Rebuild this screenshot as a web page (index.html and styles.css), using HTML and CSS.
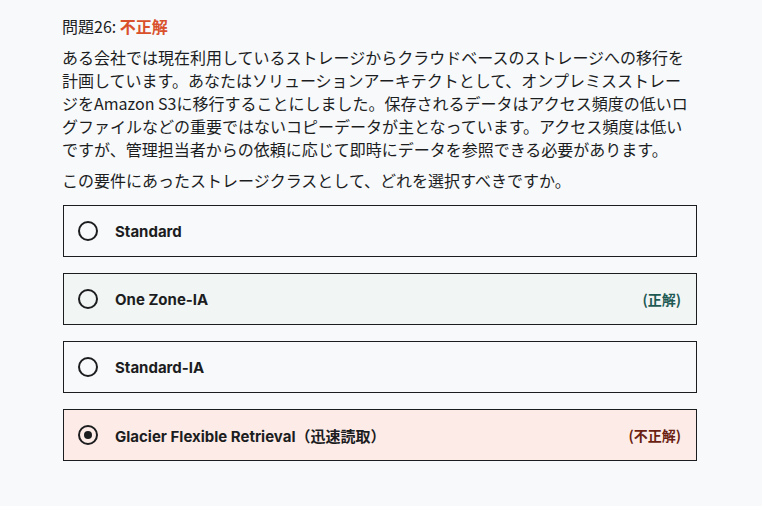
FILE: index.html
```html
<!DOCTYPE html>
<html lang="ja">
<head>
<meta charset="utf-8">
<link rel="stylesheet" href="styles.css">
</head>
<body>
<div class="quiz">
  <div class="title">問題26: <span class="wrong">不正解</span></div>
  <p class="body">ある会社では現在利用しているストレージからクラウドベースのストレージへの移行を<br>計画しています。あなたはソリューションアーキテクトとして、オンプレミスストレー<br>ジをAmazon S3に移行することにしました。保存されるデータはアクセス頻度の低いロ<br>グファイルなどの重要ではないコピーデータが主となっています。アクセス頻度は低い<br>ですが、管理担当者からの依頼に応じて即時にデータを参照できる必要があります。</p>
  <p class="body">この要件にあったストレージクラスとして、どれを選択すべきですか。</p>
  <div class="options">
    <div class="option">
      <span class="radio"></span>
      <span class="label">Standard</span>
    </div>
    <div class="option correct">
      <span class="radio"></span>
      <span class="label">One Zone-IA</span>
      <span class="tag tag-correct">(正解)</span>
    </div>
    <div class="option">
      <span class="radio"></span>
      <span class="label">Standard-IA</span>
    </div>
    <div class="option incorrect">
      <span class="radio checked"></span>
      <span class="label">Glacier Flexible Retrieval（迅速読取）</span>
      <span class="tag tag-incorrect">(不正解)</span>
    </div>
  </div>
</div>
</body>
</html>
```
FILE: styles.css
```css
html, body {
  margin: 0;
  padding: 0;
  background: #f7f9fa;
}
body {
  font-family: "Noto Sans CJK JP", "Noto Sans", sans-serif;
  color: #1c1d1f;
}
.quiz {
  padding: 15px 0 0 62px;
  width: 636px;
}
.title {
  font-size: 16px;
  line-height: 23px;
  margin: 0 0 8px 0;
}
.wrong {
  color: #d9512c;
  font-weight: 700;
}
.body {
  margin: 0 0 8px 0;
  font-size: 16px;
  line-height: 23px;
  letter-spacing: 0;
  white-space: nowrap;
}
.options {
  margin-top: 13px;
  display: flex;
  flex-direction: column;
  gap: 16px;
  padding-left: 1px;
}
.option {
  height: 50px;
  width: 603px;
  border: 1px solid #1c1d1f;
  background: #f7f9fa;
  display: flex;
  align-items: center;
  padding: 0 15px 0 14px;
}
.option.correct { background: #f1f5f4; }
.option.incorrect { background: #fdebe7; }
.radio {
  width: 16px;
  height: 16px;
  border: 2px solid #1c1d1f;
  border-radius: 50%;
  flex: none;
  display: flex;
  align-items: center;
  justify-content: center;
  margin-right: 17px;
}
.radio.checked::after {
  content: "";
  width: 8px;
  height: 8px;
  border-radius: 50%;
  background: #1c1d1f;
}
.label {
  font-family: "Inter", "Noto Sans CJK JP", sans-serif;
  font-weight: 700;
  font-size: 15px;
  flex: 1;
}
.tag {
  font-family: "Noto Sans CJK JP", sans-serif;
  font-weight: 700;
  font-size: 14px;
}
.tag-correct { color: #1e5a54; }
.tag-incorrect { color: #6a1f12; }
```
